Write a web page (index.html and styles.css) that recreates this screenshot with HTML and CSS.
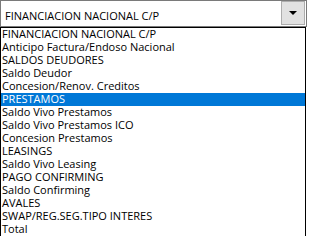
FILE: index.html
```html
<!DOCTYPE html>
<html>
<head>
<meta charset="utf-8">
<link rel="stylesheet" href="styles.css">
</head>
<body>
<div class="combo">
  <div class="select">
    <span class="value">FINANCIACION NACIONAL C/P</span>
    <span class="btn"><svg width="8" height="4" viewBox="0 0 8 4"><polygon points="0,0 8,0 4,4" fill="#000"/></svg></span>
  </div>
  <ul class="list">
    <li>FINANCIACION NACIONAL C/P</li>
    <li>Anticipo Factura/Endoso Nacional</li>
    <li>SALDOS DEUDORES</li>
    <li>Saldo Deudor</li>
    <li>Concesion/Renov. Creditos</li>
    <li class="sel">PRESTAMOS</li>
    <li>Saldo Vivo Prestamos</li>
    <li>Saldo Vivo Prestamos ICO</li>
    <li>Concesion Prestamos</li>
    <li>LEASINGS</li>
    <li>Saldo Vivo Leasing</li>
    <li>PAGO CONFIRMING</li>
    <li>Saldo Confirming</li>
    <li>AVALES</li>
    <li>SWAP/REG.SEG.TIPO INTERES</li>
    <li>Total</li>
  </ul>
</div>
</body>
</html>
```
FILE: styles.css
```css
html, body {
  margin: 0;
  padding: 0;
  background: #fff;
  overflow: hidden;
}
.combo {
  width: 307px;
  font-family: "Open Sans", "Noto Sans", sans-serif;
  font-size: 11px;
  color: #000;
}
.select {
  box-sizing: border-box;
  height: 27px;
  width: 307px;
  border: 1px solid #7a7a7a;
  display: flex;
  align-items: flex-start;
  justify-content: space-between;
  padding-left: 4px;
  padding-right: 1px;
}
.value {
  line-height: 13px;
  padding-top: 8px;
}
.btn {
  box-sizing: border-box;
  width: 24px;
  height: 24px;
  background: #e1e1e1;
  border: 1px solid #adadad;
  display: flex;
  align-items: center;
  justify-content: center;
}
.btn svg {
  display: block;
}
.list {
  list-style: none;
  margin: 0;
  padding: 0;
  box-sizing: border-box;
  width: 306px;
  border: 1px solid #000;
  border-bottom: none;
}
.list li {
  height: 11px;
  line-height: 11px;
  padding-bottom: 2px;
  padding-left: 1px;
  white-space: nowrap;
}
.list li.sel {
  background: #0078d7;
  color: #fff;
}
```
